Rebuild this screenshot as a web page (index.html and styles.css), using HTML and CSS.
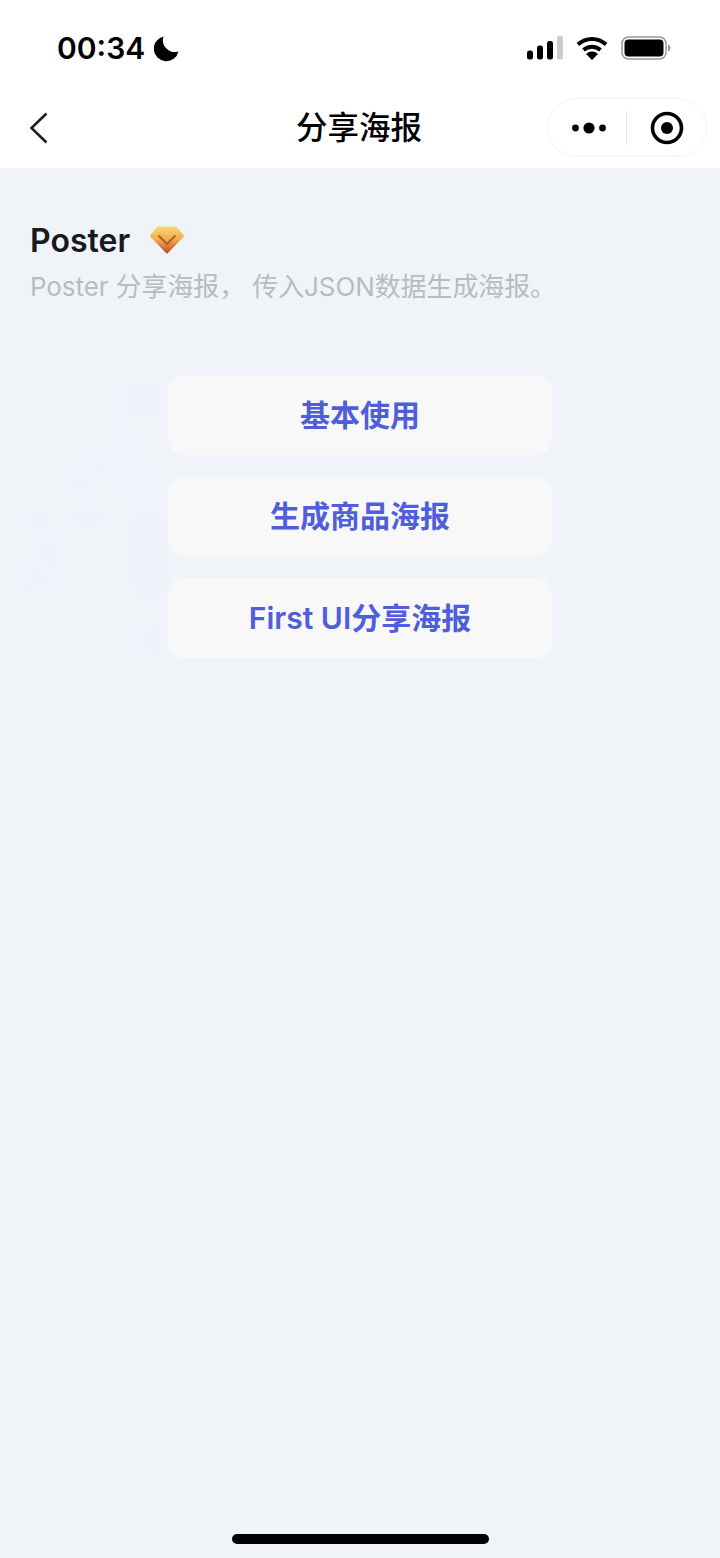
FILE: index.html
```html
<!DOCTYPE html>
<html lang="zh">
<head>
    <meta charset="UTF-8">
    <meta name="viewport" content="width=device-width, initial-scale=1.0">
    <title>分享海报</title>
    <link rel="stylesheet" href="styles.css">
</head>
<body>

<div class="top">
    <div class="status">
        <div class="status-left">
            <span class="time">00:34</span>
            <svg class="moon" width="25" height="26" viewBox="0 0 25 26"><path d="M9.500 .5A12.500 12.500 0 1 0 24.500 15.500 12 12 0 0 1 9.500 .5Z" fill="#000"/></svg>
        </div>
        <div class="status-right">
            <svg width="36" height="24" viewBox="0 0 36 24">
                <rect x="0" y="14.500" width="6" height="9" rx="2.500" fill="#000"/>
                <rect x="10" y="9.500" width="6" height="14" rx="2.500" fill="#000"/>
                <rect x="20" y="5" width="6" height="18.500" rx="2.500" fill="#000"/>
                <rect x="30" y="0" width="6" height="23.500" rx="2" fill="#ccc"/>
            </svg>
            <svg width="32" height="24" viewBox="0 0 32 24">
                <path d="M2 8.500a20.500 20.500 0 0 1 28 0" fill="none" stroke="#000" stroke-width="4"/>
                <path d="M7.500 14a12.500 12.500 0 0 1 17 0" fill="none" stroke="#000" stroke-width="4"/>
                <path d="M16 24l-6-6a8.500 8.500 0 0 1 12 0Z" fill="#000"/>
            </svg>
            <svg width="50" height="24" viewBox="0 0 50 24">
                <rect x="1" y="1" width="44" height="22" rx="6.500" fill="none" stroke="#999" stroke-width="1.500"/>
                <rect x="3.500" y="3.500" width="39" height="17" rx="4" fill="#000"/>
                <path d="M47 8.500c1.500.5 2.500 2 2.500 3.500s-1 3-2.500 3.500Z" fill="#999"/>
            </svg>
        </div>
    </div>
    <div class="nav">
        <svg width="20" height="32" viewBox="0 0 20 32"><path d="M17.500 1.500 2.500 16l15 14.500" fill="none" stroke="#222" stroke-width="2.600"/></svg>
        <div class="nav-title">分享海报</div>
        <div class="capsule">
            <div class="capsule-cell capsule-more">
                <svg width="34" height="14" viewBox="0 0 34 14">
                    <circle cx="3.500" cy="7" r="3.400" fill="#000"/>
                    <circle cx="17" cy="7" r="5.600" fill="#000"/>
                    <circle cx="30.500" cy="7" r="3.400" fill="#000"/>
                </svg>
            </div>
            <div class="capsule-line"></div>
            <div class="capsule-cell">
                <svg width="34" height="34" viewBox="0 0 34 34">
                    <circle cx="17" cy="17" r="14.500" fill="none" stroke="#000" stroke-width="3.600"/>
                    <circle cx="17" cy="17" r="6" fill="#000"/>
                </svg>
            </div>
        </div>
    </div>
</div>

<svg class="haze" width="180" height="300" viewBox="0 0 180 300" aria-hidden="true">
    <g fill="#e8edfc">
        <rect x="130" y="15" width="30" height="30"/>
        <rect x="115" y="60" width="10" height="25"/>
        <rect x="95" y="90" width="10" height="10"/>
        <rect x="75" y="105" width="10" height="15"/>
        <rect x="130" y="100" width="12" height="20"/>
        <rect x="80" y="140" width="22" height="15"/>
        <rect x="30" y="140" width="15" height="20"/>
        <rect x="40" y="175" width="20" height="20"/>
        <rect x="30" y="195" width="15" height="25"/>
        <rect x="135" y="140" width="25" height="90"/>
        <rect x="145" y="255" width="15" height="30"/>
    </g>
</svg>

<div class="content">
    <div class="head">
        <div class="title-row">
            <span class="title">Poster</span>
            <svg width="36" height="28" viewBox="0 0 36 28">
                <defs>
                    <linearGradient id="gemFill" x1="0" y1="0" x2="0" y2="1">
                        <stop offset="0" stop-color="#f8d675"/>
                        <stop offset="0.500" stop-color="#eeaa45"/>
                        <stop offset="1" stop-color="#c2502c"/>
                    </linearGradient>
                </defs>
                <path d="M9 1.500h18l7 8.500-16 16.500L2 10Z" fill="url(#gemFill)" stroke="url(#gemFill)" stroke-width="2" stroke-linejoin="round"/>
                <path d="M9.500 9.500 18 18l8.500-8.500" fill="none" stroke="#a8632a" stroke-width="2"/>
            </svg>
        </div>
        <div class="desc">Poster 分享海报， 传入JSON数据生成海报。</div>
    </div>

    <div class="btn-list">
        <div class="btn">基本使用</div>
        <div class="btn">生成商品海报</div>
        <div class="btn">First UI分享海报</div>
    </div>
</div>

<div class="home-bar"></div>

</body>
</html>
```

FILE: styles.css
```css
* {
    box-sizing: border-box;
}
body {
    margin: 0;
    height: 1558px;
    overflow: hidden;
    background-color: #f0f4f9;
    font-family: Inter, "Noto Sans CJK SC", sans-serif;
}

/* status bar + nav */
.top {
    background: #fff;
    height: 168px;
}
.status {
    height: 88px;
    padding: 8px 49px 0 57px;
    display: flex;
    justify-content: space-between;
    align-items: center;
}
.status-left {
    display: flex;
    align-items: center;
    gap: 9px;
}
.time {
    font-size: 30px;
    font-weight: 600;
    color: #000;
}
.moon {
    margin-top: 1px;
}
.status-right {
    display: flex;
    align-items: center;
    gap: 13px;
    margin-top: -1px;
}
.nav {
    height: 80px;
    display: flex;
    align-items: center;
    justify-content: space-between;
    padding: 0 13px 0 29px;
    position: relative;
}
.nav-title {
    position: absolute;
    left: 0;
    right: 2px;
    top: 19px;
    line-height: 42px;
    text-align: center;
    font-size: 31.500px;
    font-weight: 500;
    color: #000;
}
.capsule {
    width: 160px;
    height: 59px;
    margin-bottom: 1px;
    border: 1px solid #f3f3f3;
    border-radius: 30px;
    display: flex;
    align-items: center;
}
.capsule-cell {
    flex: 1;
    display: flex;
    justify-content: center;
    align-items: center;
}
.capsule-more {
    flex: none;
    width: 78px;
    padding-left: 4px;
}
.capsule-line {
    width: 1px;
    height: 34px;
    background: #e8e8e8;
}

/* faint smudges behind the buttons */
.haze {
    position: absolute;
    left: 0;
    top: 370px;
    opacity: 0.3;
    filter: blur(5px);
}

/* content */
.content {
    position: relative;
}
.head {
    padding: 52px 30px 0;
}
.title-row {
    display: flex;
    align-items: center;
    gap: 19px;
    height: 40px;
}
.title {
    font-size: 32px;
    font-weight: 600;
    color: #17191c;
}
.desc {
    margin-top: 6px;
    font-size: 26px;
    letter-spacing: -0.1px;
    color: #b8bbbf;
}
.btn-list {
    margin-top: 72px;
    display: flex;
    flex-direction: column;
    align-items: center;
    gap: 22px;
}
.btn {
    width: 384px;
    height: 79.500px;
    padding-bottom: 4px;
    border-radius: 16px;
    background: #f8f8f8;
    display: flex;
    align-items: center;
    justify-content: center;
    font-size: 30px;
    font-weight: 600;
    color: #4f5fdc;
}
.home-bar {
    position: absolute;
    left: 232px;
    top: 1534px;
    width: 257px;
    height: 10px;
    border-radius: 5px;
    background: #000;
}
```
